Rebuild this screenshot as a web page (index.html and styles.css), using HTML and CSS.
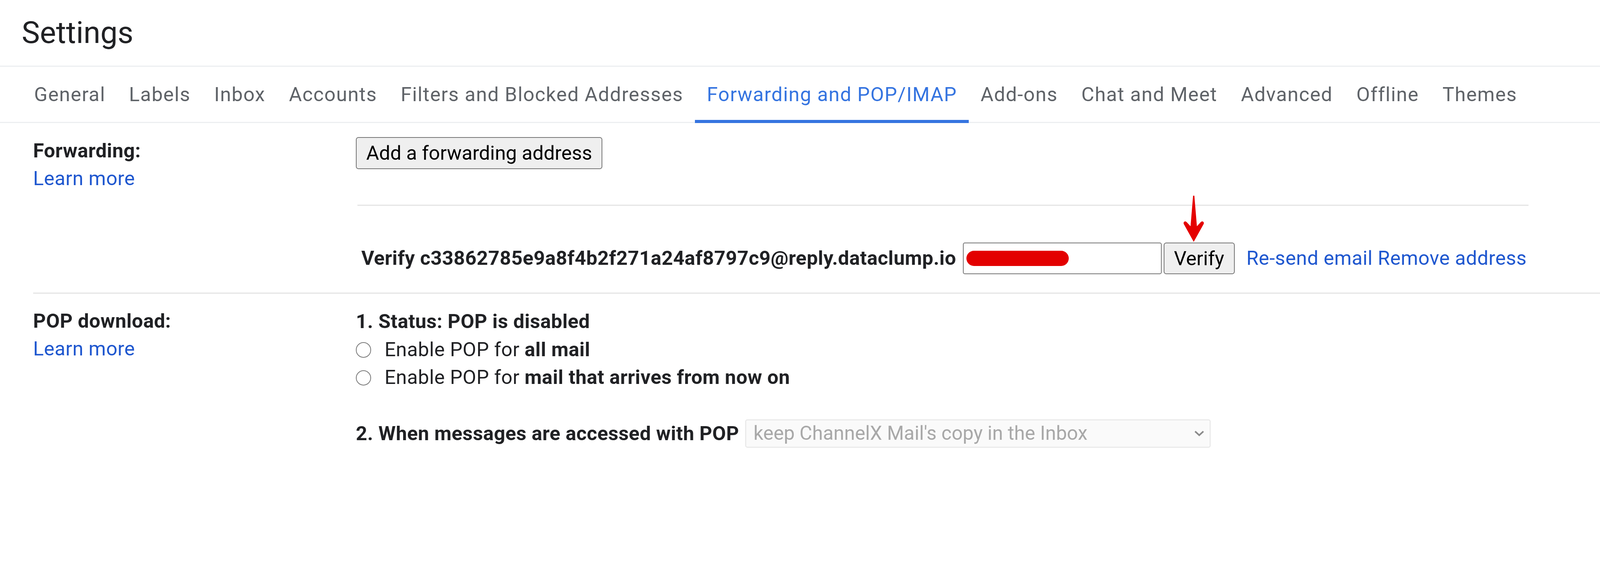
FILE: index.html
```html
<!DOCTYPE html>
<html lang="en">
<head>
<meta charset="utf-8">
<title>Settings</title>
<link rel="stylesheet" href="styles.css">
</head>
<body>
<header class="title-bar"><h1 class="title">Settings</h1></header>
<nav class="tabs">
  <span class="tab">General</span>
  <span class="tab">Labels</span>
  <span class="tab">Inbox</span>
  <span class="tab">Accounts</span>
  <span class="tab">Filters and Blocked Addresses</span>
  <span class="tab active">Forwarding and POP/IMAP</span>
  <span class="tab">Add-ons</span>
  <span class="tab">Chat and Meet</span>
  <span class="tab">Advanced</span>
  <span class="tab">Offline</span>
  <span class="tab">Themes</span>
</nav>

<section class="setting forwarding">
  <div class="label-col">
    <div class="label-title">Forwarding:</div>
    <a class="learn" href="#">Learn more</a>
  </div>
  <div class="body-col">
    <button class="btn add-btn" type="button">Add a forwarding address</button>
    <hr class="sep">
    <div class="verify-row">
      <span class="verify-text">Verify c33862785e9a8f4b2f271a24af8797c9@reply.dataclump.io</span>
      <div class="code-input"><span class="redact"></span></div>
      <div class="verify-wrap">
        <button class="btn verify-btn" type="button">Verify</button>
        <svg class="arrow" viewBox="0 0 66 146" aria-hidden="true">
          <path d="M31 0 L35 0 L43 96 L55 83 Q60 78 64 83 Q66 87 63 91 L33 145 L3 91 Q0 87 2 83 Q6 78 11 83 L23 96 Z" fill="#e40000"/>
        </svg>
      </div>
      <span class="links"><a href="#">Re-send email</a> <a href="#">Remove address</a></span>
    </div>
  </div>
</section>

<section class="setting pop">
  <div class="label-col">
    <div class="label-title">POP download:</div>
    <a class="learn" href="#">Learn more</a>
  </div>
  <div class="body-col">
    <div class="status">1. Status: POP is disabled</div>
    <label class="radio-row"><input class="radio" type="radio" name="pop"><span>Enable POP for <b>all mail</b></span></label>
    <label class="radio-row"><input class="radio" type="radio" name="pop"><span>Enable POP for <b>mail that arrives from now on</b></span></label>
    <div class="access-row">
      <span class="access-label">2. When messages are accessed with POP</span>
      <div class="select">
        <span>keep ChannelX Mail's copy in the Inbox</span>
        <svg class="chev" viewBox="0 0 32 18" aria-hidden="true"><path d="M3 3 L16 15 L29 3" fill="none" stroke="#8a8a8a" stroke-width="5"/></svg>
      </div>
    </div>
  </div>
</section>
</body>
</html>
```
FILE: styles.css
```css
/* 1rem = 1/50.22 of the viewport width (100 reference pixels) */
html {
  font-size: calc(100vw / 50.22);
}

body {
  margin: 0;
  background: #ffffff;
  color: #202124;
  font-family: Roboto, "Liberation Sans", Arial, sans-serif;
  overflow: hidden;
}

.title-bar {
  height: 2.06rem;
  display: flex;
  align-items: center;
  padding-left: 0.68rem;
  border-bottom: 0.04rem solid #eceff1;
}

.title {
  margin: 0;
  font-size: 0.96rem;
  font-weight: 400;
  line-height: 1.2;
  color: #202124;
}

.tabs {
  display: flex;
  align-items: flex-start;
  height: 1.73rem;
  padding-left: 0.70rem;
  border-bottom: 0.04rem solid #eceff1;
}

.tab {
  height: 1.73rem;
  box-sizing: border-box;
  display: flex;
  align-items: center;
  padding: 0 0.37rem;
  font-size: 0.62rem;
  letter-spacing: 0.019rem;
  color: #5f6368;
  white-space: nowrap;
}

.tab.active {
  height: 1.77rem;
  padding-top: 0.06rem;
  color: #3574e0;
  border-bottom: 0.10rem solid #3574e0;
}

.setting {
  display: grid;
  grid-template-columns: 10.13rem 1fr;
  margin-left: 1.04rem;
  font-size: 0.62rem;
  line-height: 0.87rem;
  letter-spacing: 0.006rem;
}

.forwarding {
  padding: 0.44rem 0 0.57rem;
}

.pop {
  border-top: 0.04rem solid #e5e5e5;
  padding-top: 0.43rem;
}

.label-title {
  font-weight: 700;
}

.learn {
  color: #1f57cf;
  text-decoration: none;
}

.btn {
  font-family: Roboto, "Liberation Sans", Arial, sans-serif;
  font-size: 0.62rem;
  letter-spacing: 0;
  color: #000000;
  background: #efefef;
  border: 0.03rem solid #767676;
  border-radius: 0.08rem;
  height: 1rem;
  padding: 0 0.30rem;
  box-sizing: border-box;
}

.add-btn {
  display: block;
}

.sep {
  border: 0;
  border-top: 0.04rem solid #e5e5e5;
  margin: 1.12rem 0 0 0.05rem;
  width: 36.76rem;
  height: 0;
}

.verify-row {
  display: flex;
  align-items: center;
  margin-top: 1.16rem;
  height: 0.99rem;
}

.verify-text {
  font-weight: 700;
  padding-left: 0.17rem;
  white-space: nowrap;
}

.code-input {
  width: 6.24rem;
  height: 0.99rem;
  box-sizing: border-box;
  margin-left: 0.21rem;
  border: 0.03rem solid #767676;
  border-radius: 0.06rem;
  background: #ffffff;
  display: flex;
  align-items: center;
  padding-left: 0.09rem;
  flex-shrink: 0;
}

.redact {
  width: 3.21rem;
  height: 0.48rem;
  border-radius: 0.24rem;
  background: #e30000;
}

.verify-wrap {
  position: relative;
  margin-left: 0.06rem;
  flex-shrink: 0;
}

.verify-btn {
  display: block;
  width: 2.23rem;
  height: 0.99rem;
  padding: 0;
}

.arrow {
  position: absolute;
  left: 0.62rem;
  top: -1.48rem;
  width: 0.66rem;
  height: 1.46rem;
}

.links {
  margin-left: 0.37rem;
  white-space: nowrap;
}

.links a {
  color: #1f57cf;
  text-decoration: none;
}

.status {
  font-weight: 700;
  line-height: 0.88rem;
}

.radio-row {
  display: flex;
  align-items: center;
  height: 0.88rem;
  line-height: 0.88rem;
}

.radio {
  appearance: none;
  -webkit-appearance: none;
  width: 0.48rem;
  height: 0.48rem;
  box-sizing: border-box;
  border: 0.03rem solid #7a7a7a;
  border-radius: 50%;
  margin: 0.04rem 0.42rem 0 0;
  background: #ffffff;
  flex-shrink: 0;
}

.radio-row b {
  font-weight: 700;
}

.access-row {
  display: flex;
  align-items: center;
  margin-top: 0.88rem;
  line-height: 0.88rem;
}

.access-label {
  font-weight: 700;
  white-space: nowrap;
}

.select {
  margin-left: 0.20rem;
  width: 14.6rem;
  height: 0.88rem;
  box-sizing: border-box;
  border: 0.03rem solid #e3e3e3;
  border-radius: 0.06rem;
  background: #fafafa;
  color: #a8a8a8;
  font-size: 0.61rem;
  letter-spacing: 0;
  display: flex;
  align-items: center;
  justify-content: space-between;
  padding: 0 0.17rem 0 0.23rem;
  flex-shrink: 0;
}

.chev {
  display: block;
  width: 0.32rem;
  height: 0.18rem;
}
```
